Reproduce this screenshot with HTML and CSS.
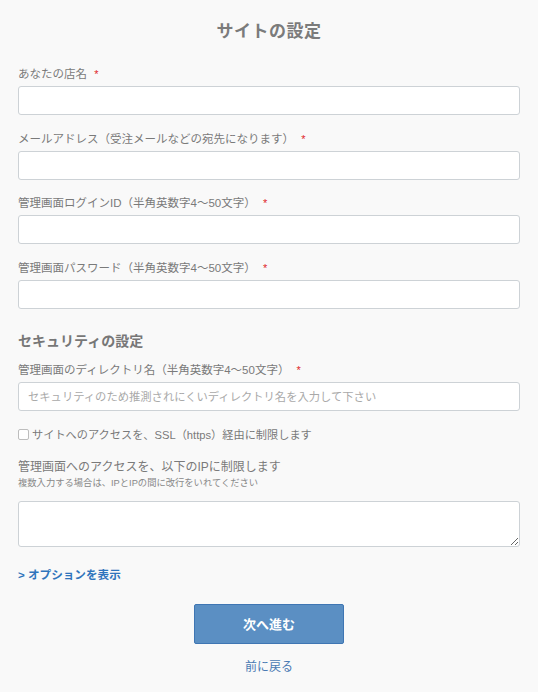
FILE: index.html
```html
<!DOCTYPE html>
<html lang="ja">
<head>
<meta charset="utf-8">
<title>サイトの設定</title>
<link rel="stylesheet" href="styles.css">
</head>
<body>
<main class="page">
  <h1 class="title">サイトの設定</h1>

  <div class="field">
    <label class="label">あなたの店名 <span class="req">*</span></label>
    <input class="input" type="text">
  </div>
  <div class="field">
    <label class="label">メールアドレス（受注メールなどの宛先になります） <span class="req">*</span></label>
    <input class="input" type="text">
  </div>
  <div class="field">
    <label class="label">管理画面ログインID（半角英数字4〜50文字） <span class="req">*</span></label>
    <input class="input" type="text">
  </div>
  <div class="field">
    <label class="label">管理画面パスワード（半角英数字4〜50文字） <span class="req">*</span></label>
    <input class="input" type="password">
  </div>

  <h2 class="section">セキュリティの設定</h2>

  <div class="field">
    <label class="label">管理画面のディレクトリ名（半角英数字4〜50文字） <span class="req">*</span></label>
    <input class="input" type="text" placeholder="セキュリティのため推測されにくいディレクトリ名を入力して下さい">
  </div>

  <label class="check-row"><span class="checkbox"></span>サイトへのアクセスを、SSL（https）経由に制限します</label>

  <div class="ip-block">
    <div class="ip-label">管理画面へのアクセスを、以下のIPに制限します</div>
    <div class="hint">複数入力する場合は、IPとIPの間に改行をいれてください</div>
    <textarea class="textarea"></textarea>
  </div>

  <a class="option-link" href="#">&gt; オプションを表示</a>

  <div class="actions">
    <button class="btn" type="button">次へ進む</button>
    <a class="back" href="#">前に戻る</a>
  </div>
</main>
</body>
</html>
```

FILE: styles.css
```css
* { box-sizing: border-box; }
html, body {
  margin: 0;
  padding: 0;
  background: #f9f9f9;
}
body {
  font-family: "Liberation Sans", "Noto Sans CJK JP", sans-serif;
  color: #777;
}
.page {
  padding: 20px 18px 0 18px;
  display: flex;
  flex-direction: column;
}
.title {
  margin: 0 0 22px 0;
  font-size: 17px;
  line-height: 24px;
  font-weight: bold;
  text-align: center;
  color: #7b7b7b;
  letter-spacing: 0.5px;
}
.field {
  display: flex;
  flex-direction: column;
  margin-bottom: 15.5px;
}
.label {
  display: block;
  font-size: 11.5px;
  line-height: 16px;
  margin-bottom: 4px;
  color: #7a7a7a;
}
.req {
  color: #e0262b;
  font-size: 11px;
  margin-left: 4px;
}
.input {
  height: 29px;
  width: 100%;
  border: 1px solid #cdd2d6;
  border-radius: 3px;
  background: #fff;
  padding: 0 9px;
  font-family: inherit;
  font-size: 11.3px;
  color: #555;
  outline: none;
}
.input::placeholder {
  color: #a9a9a9;
}
.section {
  margin: 7px 0 11px 0;
  font-size: 14px;
  line-height: 20px;
  font-weight: bold;
  color: #777;
}
.check-row {
  display: flex;
  align-items: center;
  font-size: 11.2px;
  line-height: 16px;
  color: #7a7a7a;
}
.checkbox {
  width: 11px;
  height: 11px;
  border: 1px solid #bdbdbd;
  border-radius: 2px;
  background: #fff;
  margin-right: 3px;
  flex: none;
}
.ip-block {
  margin-top: 16px;
  display: flex;
  flex-direction: column;
}
.ip-label {
  font-size: 12px;
  line-height: 16px;
  color: #7a7a7a;
}
.hint {
  margin-top: 2px;
  font-size: 9.3px;
  line-height: 12px;
  color: #888;
}
.textarea {
  margin-top: 12px;
  height: 46px;
  width: 100%;
  border: 1px solid #cdd2d6;
  border-radius: 3px;
  background: #fff;
  resize: vertical;
  font-family: inherit;
  outline: none;
}
.option-link {
  margin-top: 20px;
  align-self: flex-start;
  font-size: 11.6px;
  line-height: 16px;
  font-weight: bold;
  color: #2f74bc;
  text-decoration: none;
}
.actions {
  margin-top: 21px;
  display: flex;
  flex-direction: column;
  align-items: center;
}
.btn {
  width: 150px;
  height: 40px;
  background: #5b8fc3;
  border: 1px solid #3f76b3;
  border-radius: 2px;
  color: #fff;
  font-family: inherit;
  font-size: 13px;
  font-weight: bold;
  padding: 0;
}
.back {
  margin-top: 15px;
  font-size: 12px;
  line-height: 16px;
  color: #4a7ab3;
  text-decoration: none;
}
```
